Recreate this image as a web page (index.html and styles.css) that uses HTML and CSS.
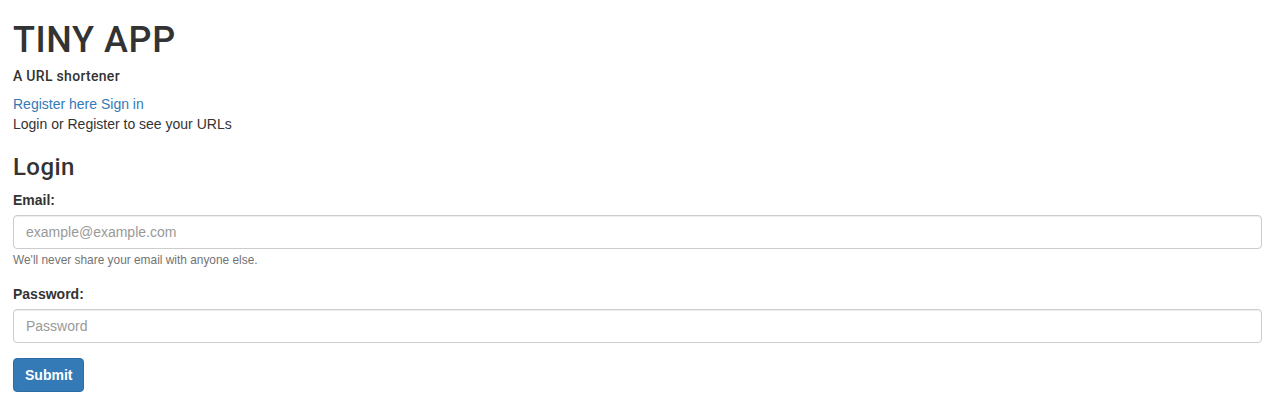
FILE: index.html
```html
<!DOCTYPE html>
<html lang="en">
<head>
<meta charset="utf-8">
<title>Tiny App</title>
<link rel="stylesheet" href="styles.css">
</head>
<body>
<div class="container">
  <header class="masthead">
    <h1 class="title">TINY APP</h1>
    <h5 class="subtitle">A URL shortener</h5>
    <nav class="auth-links">
      <a href="#">Register here</a>
      <a href="#">Sign in</a>
    </nav>
    <p class="notice">Login or Register to see your URLs</p>
  </header>

  <h3 class="section-title">Login</h3>
  <form class="login-form">
    <div class="form-group form-group-help">
      <label for="email">Email:</label>
      <input type="email" id="email" class="form-control" placeholder="example@example.com">
      <small class="help-text">We'll never share your email with anyone else.</small>
    </div>
    <div class="form-group">
      <label for="password">Password:</label>
      <input type="password" id="password" class="form-control" placeholder="Password">
    </div>
    <button type="submit" class="btn-primary">Submit</button>
  </form>
</div>
</body>
</html>
```

FILE: styles.css
```css
* {
  box-sizing: border-box;
}

html, body {
  margin: 0;
  padding: 0;
  background: #fff;
}

body {
  font-family: "Liberation Sans", Arial, Helvetica, sans-serif;
  font-size: 14px;
  line-height: 20px;
  color: #333;
}

.container {
  padding: 0 12px 0 13px;
}

.title,
.subtitle,
.section-title {
  font-family: Roboto, "Liberation Sans", Arial, sans-serif;
  font-weight: 500;
  line-height: 1.1;
  color: #333;
}

.title {
  font-size: 36px;
  letter-spacing: 0.6px;
  margin: 21px 0 8px;
}

.subtitle {
  font-size: 14px;
  letter-spacing: 0.3px;
  margin: 8px 0 10px;
}

.auth-links a {
  color: #337ab7;
  text-decoration: none;
}

.notice {
  margin: 0;
}

.section-title {
  font-size: 24px;
  letter-spacing: 0.4px;
  margin: 20px 0 10px;
}

.login-form {
  margin: 0;
}

.form-group {
  margin-bottom: 15px;
}

.form-group-help {
  margin-bottom: 14px;
}

.form-group label {
  display: inline-block;
  margin-bottom: 5px;
  font-weight: 700;
}

.form-control {
  display: block;
  width: 100%;
  height: 34px;
  padding: 6px 12px;
  font-family: inherit;
  font-size: 14px;
  line-height: 20px;
  color: #555;
  background: #fff;
  border: 1px solid #ccc;
  border-radius: 4px;
  box-shadow: inset 0 1px 1px rgba(0, 0, 0, 0.075);
  outline: none;
}

.form-control::placeholder {
  color: #999;
}

.help-text {
  font-size: 85%;
  color: #737373;
}

.btn-primary {
  display: inline-block;
  height: 34px;
  padding: 6px 11px;
  font-family: inherit;
  font-size: 14px;
  font-weight: 700;
  line-height: 20px;
  color: #fff;
  background: #337ab7;
  border: 1px solid #2e6da4;
  border-radius: 4px;
  cursor: pointer;
}
```
